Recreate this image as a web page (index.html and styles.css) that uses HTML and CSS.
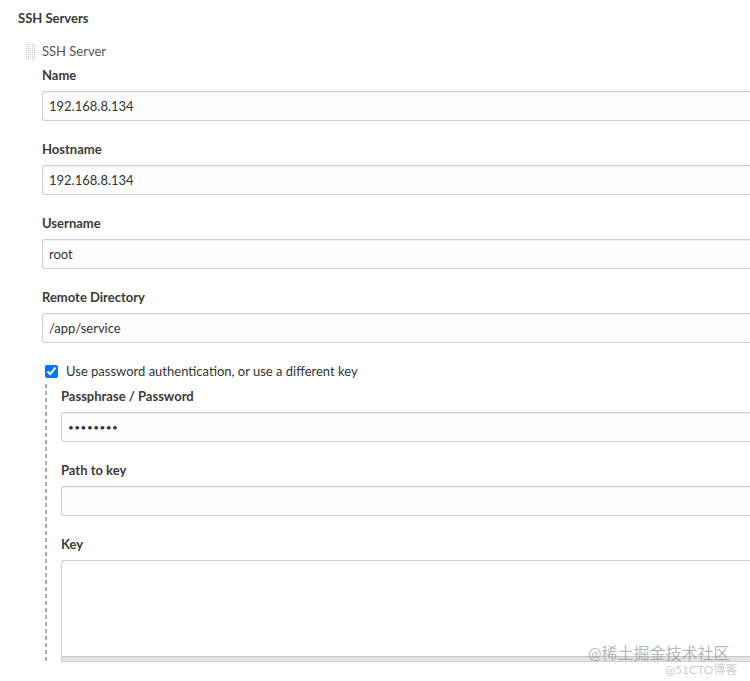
FILE: index.html
```html
<!DOCTYPE html>
<html>
<head>
<meta charset="utf-8">
<link rel="stylesheet" href="styles.css">
</head>
<body>
<div class="page">
  <div class="section-title">SSH Servers</div>
  <div class="server">
    <div class="server-head">
      <span class="handle"></span>
      <span class="server-name">SSH Server</span>
    </div>
    <div class="fields">
      <div class="field">
        <div class="label">Name</div>
        <div class="input">192.168.8.134</div>
      </div>
      <div class="field">
        <div class="label">Hostname</div>
        <div class="input">192.168.8.134</div>
      </div>
      <div class="field">
        <div class="label">Username</div>
        <div class="input">root</div>
      </div>
      <div class="field">
        <div class="label">Remote Directory</div>
        <div class="input">/app/service</div>
      </div>
      <label class="check-row">
        <input type="checkbox" class="check" checked>
        <span class="check-text">Use password authentication, or use a different key</span>
      </label>
      <div class="nested">
        <div class="field">
          <div class="label">Passphrase / Password</div>
          <div class="input dots">••••••••</div>
        </div>
        <div class="field">
          <div class="label">Path to key</div>
          <div class="input"></div>
        </div>
        <div class="field last">
          <div class="label">Key</div>
          <div class="textarea"><div class="textarea-bar"></div></div>
        </div>
      </div>
    </div>
  </div>
  <div class="watermark">
    <div class="wm-main">@稀土掘金技术社区</div>
    <div class="wm-sub">@51CTO博客</div>
  </div>
</div>
</body>
</html>
```

FILE: styles.css
```css
html, body {
  margin: 0;
  padding: 0;
  background: #fff;
  overflow: hidden;
}
body {
  width: 750px;
  height: 681px;
  font-family: Lato, "Noto Sans CJK SC", sans-serif;
  font-size: 13px;
  color: #333;
}
.page {
  position: relative;
  width: 750px;
  height: 681px;
  padding: 10px 0 0 18px;
  box-sizing: border-box;
  overflow: hidden;
}
.section-title {
  height: 16px;
  line-height: 16px;
  font-weight: 700;
  color: #3a3a3a;
}
.server {
  margin-top: 17px;
  margin-left: 7px;
}
.server-head {
  display: flex;
  align-items: center;
  height: 16px;
}
.handle {
  width: 10px;
  height: 17px;
  margin-right: 7px;
  background-image: linear-gradient(90deg, #fff 1px, transparent 1px), linear-gradient(#fff 1px, transparent 1px);
  background-size: 2px 2px;
  background-color: #c8c8c8;
}
.server-name {
  line-height: 16px;
  color: #555;
}
.fields {
  margin-left: 17px;
  padding-top: 8px;
}
.field {
  margin-bottom: 20px;
}
.label {
  height: 16px;
  line-height: 16px;
  font-weight: 700;
  color: #3a3a3a;
  margin-bottom: 8px;
}
.input {
  height: 30px;
  box-sizing: border-box;
  border: 1px solid #cfcfcf;
  border-right: none;
  border-radius: 3px 0 0 3px;
  box-shadow: inset 0 1px 1px rgba(0,0,0,0.06);
  background: #fdfdfd;
  padding: 0 6px;
  line-height: 28px;
  color: #333;
}
.dots {
  font-size: 10px;
  letter-spacing: 0.5px;
  color: #333;
}
.check-row {
  display: flex;
  align-items: center;
  height: 16px;
  margin-left: 3px;
}
.check {
  width: 13px;
  height: 13px;
  margin: 0 8px 0 0;
}
.check-text {
  line-height: 16px;
  color: #333;
}
.nested {
  margin-top: 5px;
  margin-left: 3px;
  padding: 4px 0 0 16px;
  height: 279px;
  box-sizing: border-box;
  background-image: repeating-linear-gradient(to bottom, #aaa 0 4px, transparent 4px 7px);
  background-size: 2px 100%;
  background-repeat: no-repeat;
}
.nested .field.last {
  margin-bottom: 0;
}
.textarea {
  height: 102px;
  box-sizing: border-box;
  border: 1px solid #cfcfcf;
  border-right: none;
  border-radius: 3px 0 0 0;
  background: #fff;
  display: flex;
  flex-direction: column;
  justify-content: flex-end;
}
.textarea-bar {
  height: 4px;
  background: #e2e2e2;
  border-top: 1px solid #c8c8c8;
}
.watermark {
  position: absolute;
  left: 588px;
  top: 643px;
}
.wm-main {
  font-size: 16px;
  line-height: 20px;
  color: rgba(120,120,120,0.55);
  white-space: nowrap;
}
.wm-sub {
  margin-left: 77px;
  font-size: 12px;
  line-height: 14px;
  color: rgba(180,180,180,0.7);
  white-space: nowrap;
}
```
